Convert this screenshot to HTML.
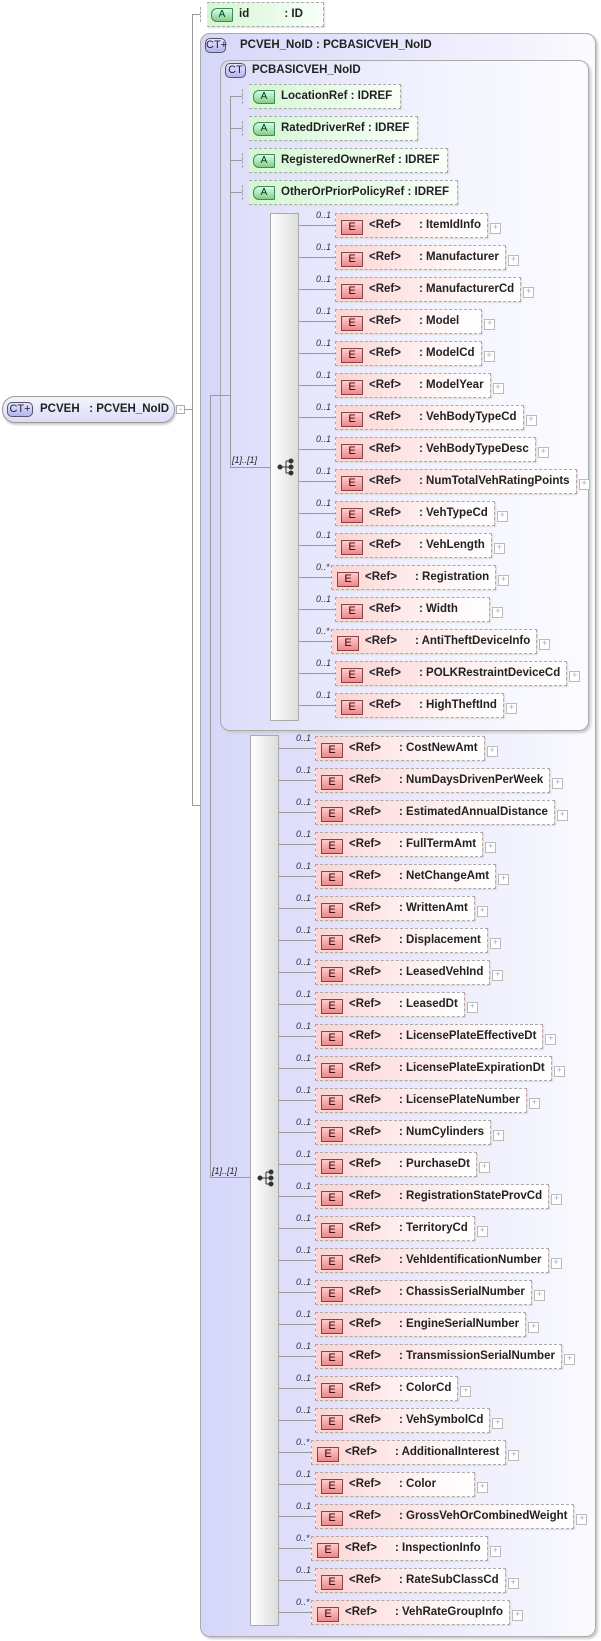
<!DOCTYPE html>
<html><head><meta charset="utf-8"><style>
*{margin:0;padding:0;box-sizing:border-box}
body{width:601px;height:1641px;background:#fff;position:relative;overflow:hidden;font-family:"Liberation Sans",Arial,sans-serif;font-weight:bold;font-size:11.5px;color:#222}
.a{position:absolute}
.ln{position:absolute;background:#999}
.ct{position:absolute;border:1px solid #aaa;border-radius:10px;background:linear-gradient(90deg,#d6d6fa 0%,#e8e8fc 50%,#fafaff 100%);box-shadow:2px 2px 2px #ccc}
.ico{position:absolute;border:1px solid #556;border-radius:5px;background:linear-gradient(#e4e4ff,#b4b4f0);font-weight:normal;font-size:11px;color:#223;text-align:center;line-height:13px;height:15px}
.at{position:absolute;height:25px;border:1px dashed #aaa;background:linear-gradient(90deg,#d4f6d4,#f8fff8);padding:0 8px 0 32px;line-height:23px;white-space:nowrap;border-left:none;box-shadow:1px 1px 1px #ddd}
.at:before{content:"";position:absolute;left:-7px;top:4px;width:14px;height:15px;border-left:1px dashed #aaa;transform:skewX(0)}
.at i{position:absolute;left:4px;top:5px;width:22px;height:14px;border:1px solid #485;border-radius:6px 1px 1px 6px;background:linear-gradient(#cfe,#8c8);font-style:normal;font-weight:normal;font-size:10px;text-align:center;line-height:12px;color:#030}
.seq{position:absolute;width:29px;border:1px solid #aaa;background:linear-gradient(90deg,#fff,#ddd)}
.r{position:absolute;height:25px}
.r .l{position:absolute;left:0;top:12px;height:1px;background:#999}
.r .m{position:absolute;top:-3px;font-style:italic;font-weight:normal;font-size:9px;color:#333}
.e{position:absolute;top:0;height:25px;border:1px dashed #aaa;background:linear-gradient(90deg,#fcd4d4,#fff6f6 70%,#fff);white-space:nowrap;line-height:23px;padding-right:6px;box-shadow:1px 1px 1px #ddd}
.e i{display:inline-block;vertical-align:top;margin:6px 6px 0 5px;width:22px;height:15px;border:1px solid #844;background:linear-gradient(#fcc,#e88);font-style:normal;font-weight:normal;font-size:11px;line-height:13px;text-align:center;color:#300}
.e b{display:inline-block;width:50px}
.e:after{content:"+";position:absolute;right:-14px;top:9px;width:9px;height:9px;border:1px solid #bbb;font-size:9px;line-height:7px;text-align:center;color:#aaa;font-weight:normal;background:#fff}
.r1{left:299px}.r1 .l{width:36px}.r1 .m{left:17px}.r1 .e{left:36px}.r1.s .e{left:32px}
.r2{left:279px}.r2 .l{width:36px}.r2 .m{left:17px}.r2 .e{left:36px}.r2.s .e{left:32px}
.sq{position:absolute;font-weight:normal;font-style:italic;font-size:9px}
</style></head><body>

<!-- connectors outside -->
<div class="ln" style="left:185px;top:409px;width:8px;height:1px"></div>
<div class="ln" style="left:192px;top:14px;width:1px;height:792px"></div>
<div class="ln" style="left:192px;top:14px;width:8px;height:1px"></div>
<div class="ln" style="left:192px;top:805px;width:9px;height:1px"></div>

<!-- root -->
<div class="a" style="left:2px;top:396px;width:173px;height:27px;border:1px solid #999;border-radius:13px;background:linear-gradient(#f4f4ff,#dcdcf8);box-shadow:1px 2px 2px #ccc"></div>
<div class="ico" style="left:7px;top:402px;width:26px">CT+</div>
<div class="a" style="left:40px;top:402px;line-height:14px">PCVEH&nbsp;&nbsp;&nbsp;: PCVEH_NoID</div>
<div class="a" style="left:176px;top:405px;width:9px;height:9px;border:1px solid #aaa;background:#fff;font-size:9px;line-height:6px;text-align:center;color:#999;font-weight:normal">-</div>

<!-- id -->
<div class="at" style="left:207px;top:2px;padding-right:20px">id&nbsp;&nbsp;&nbsp;&nbsp;&nbsp;&nbsp;&nbsp;&nbsp;&nbsp;&nbsp;&nbsp;: ID<i>A</i></div>

<!-- outer CT -->
<div class="ct" style="left:200px;top:33px;width:396px;height:1604px"></div>
<div class="ico" style="left:205px;top:38px;width:21px">CT+</div>
<div class="a" style="left:240px;top:38px;line-height:14px">PCVEH_NoID : PCBASICVEH_NoID</div>

<!-- inner CT -->
<div class="ct" style="left:220px;top:60px;width:369px;height:671px;background:linear-gradient(90deg,#dcdcfa,#f4f4ff 60%,#fbfbff)"></div>
<div class="ico" style="left:225px;top:63px;width:21px">CT</div>
<div class="a" style="left:252px;top:63px;line-height:14px">PCBASICVEH_NoID</div>

<!-- lines in outer -->
<div class="ln" style="left:210px;top:395px;width:1px;height:782px"></div>
<div class="ln" style="left:210px;top:395px;width:20px;height:1px"></div>
<div class="ln" style="left:230px;top:96px;width:1px;height:372px"></div>
<div class="ln" style="left:230px;top:96px;width:12px;height:1px"></div>
<div class="ln" style="left:230px;top:128px;width:12px;height:1px"></div>
<div class="ln" style="left:230px;top:160px;width:12px;height:1px"></div>
<div class="ln" style="left:230px;top:192px;width:12px;height:1px"></div>
<div class="ln" style="left:230px;top:467px;width:40px;height:1px"></div>
<div class="ln" style="left:210px;top:1177px;width:40px;height:1px"></div>

<div class="at" style="left:249px;top:84px">LocationRef : IDREF<i>A</i></div>
<div class="at" style="left:249px;top:116px">RatedDriverRef : IDREF<i>A</i></div>
<div class="at" style="left:249px;top:148px">RegisteredOwnerRef : IDREF<i>A</i></div>
<div class="at" style="left:249px;top:180px">OtherOrPriorPolicyRef : IDREF<i>A</i></div>

<!-- seq 1 -->
<div class="seq" style="left:270px;top:213px;height:508px"></div>
<div class="sq" style="left:232px;top:455px">[1]..[1]</div>
<svg class="a" style="left:277px;top:458px" width="18" height="18"><g fill="#333" stroke="#333"><circle cx="3" cy="9" r="2"/><circle cx="14" cy="3" r="2"/><circle cx="14" cy="9" r="2"/><circle cx="14" cy="15" r="2"/><path d="M3 9H9M9 3V15M9 3H14M9 9H14M9 15H14" fill="none"/></g></svg>

<div class="r r1" style="top:213px"><div class="l"></div><div class="m">0..1</div><div class="e"><i>E</i><b>&lt;Ref&gt;</b>: ItemIdInfo</div></div>
<div class="r r1" style="top:245px"><div class="l"></div><div class="m">0..1</div><div class="e"><i>E</i><b>&lt;Ref&gt;</b>: Manufacturer</div></div>
<div class="r r1" style="top:277px"><div class="l"></div><div class="m">0..1</div><div class="e"><i>E</i><b>&lt;Ref&gt;</b>: ManufacturerCd</div></div>
<div class="r r1" style="top:309px"><div class="l"></div><div class="m">0..1</div><div class="e"><i>E</i><b>&lt;Ref&gt;</b>: Model&nbsp;&nbsp;&nbsp;&nbsp;&nbsp;</div></div>
<div class="r r1" style="top:341px"><div class="l"></div><div class="m">0..1</div><div class="e"><i>E</i><b>&lt;Ref&gt;</b>: ModelCd</div></div>
<div class="r r1" style="top:373px"><div class="l"></div><div class="m">0..1</div><div class="e"><i>E</i><b>&lt;Ref&gt;</b>: ModelYear</div></div>
<div class="r r1" style="top:405px"><div class="l"></div><div class="m">0..1</div><div class="e"><i>E</i><b>&lt;Ref&gt;</b>: VehBodyTypeCd</div></div>
<div class="r r1" style="top:437px"><div class="l"></div><div class="m">0..1</div><div class="e"><i>E</i><b>&lt;Ref&gt;</b>: VehBodyTypeDesc</div></div>
<div class="r r1" style="top:469px"><div class="l"></div><div class="m">0..1</div><div class="e"><i>E</i><b>&lt;Ref&gt;</b>: NumTotalVehRatingPoints</div></div>
<div class="r r1" style="top:501px"><div class="l"></div><div class="m">0..1</div><div class="e"><i>E</i><b>&lt;Ref&gt;</b>: VehTypeCd</div></div>
<div class="r r1" style="top:533px"><div class="l"></div><div class="m">0..1</div><div class="e"><i>E</i><b>&lt;Ref&gt;</b>: VehLength</div></div>
<div class="r r1 s" style="top:565px"><div class="l"></div><div class="m">0..*</div><div class="e"><i>E</i><b>&lt;Ref&gt;</b>: Registration</div></div>
<div class="r r1" style="top:597px"><div class="l"></div><div class="m">0..1</div><div class="e"><i>E</i><b>&lt;Ref&gt;</b>: Width&nbsp;&nbsp;&nbsp;&nbsp;&nbsp;&nbsp;&nbsp;&nbsp;</div></div>
<div class="r r1 s" style="top:629px"><div class="l"></div><div class="m">0..*</div><div class="e"><i>E</i><b>&lt;Ref&gt;</b>: AntiTheftDeviceInfo</div></div>
<div class="r r1" style="top:661px"><div class="l"></div><div class="m">0..1</div><div class="e"><i>E</i><b>&lt;Ref&gt;</b>: POLKRestraintDeviceCd</div></div>
<div class="r r1" style="top:693px"><div class="l"></div><div class="m">0..1</div><div class="e"><i>E</i><b>&lt;Ref&gt;</b>: HighTheftInd</div></div>

<!-- seq 2 -->
<div class="seq" style="left:250px;top:735px;height:891px"></div>
<div class="sq" style="left:212px;top:1166px">[1]..[1]</div>
<svg class="a" style="left:257px;top:1169px" width="18" height="18"><g fill="#333" stroke="#333"><circle cx="3" cy="9" r="2"/><circle cx="14" cy="3" r="2"/><circle cx="14" cy="9" r="2"/><circle cx="14" cy="15" r="2"/><path d="M3 9H9M9 3V15M9 3H14M9 9H14M9 15H14" fill="none"/></g></svg>

<div class="r r2" style="top:736px"><div class="l"></div><div class="m">0..1</div><div class="e"><i>E</i><b>&lt;Ref&gt;</b>: CostNewAmt</div></div>
<div class="r r2" style="top:768px"><div class="l"></div><div class="m">0..1</div><div class="e"><i>E</i><b>&lt;Ref&gt;</b>: NumDaysDrivenPerWeek</div></div>
<div class="r r2" style="top:800px"><div class="l"></div><div class="m">0..1</div><div class="e"><i>E</i><b>&lt;Ref&gt;</b>: EstimatedAnnualDistance</div></div>
<div class="r r2" style="top:832px"><div class="l"></div><div class="m">0..1</div><div class="e"><i>E</i><b>&lt;Ref&gt;</b>: FullTermAmt</div></div>
<div class="r r2" style="top:864px"><div class="l"></div><div class="m">0..1</div><div class="e"><i>E</i><b>&lt;Ref&gt;</b>: NetChangeAmt</div></div>
<div class="r r2" style="top:896px"><div class="l"></div><div class="m">0..1</div><div class="e"><i>E</i><b>&lt;Ref&gt;</b>: WrittenAmt</div></div>
<div class="r r2" style="top:928px"><div class="l"></div><div class="m">0..1</div><div class="e"><i>E</i><b>&lt;Ref&gt;</b>: Displacement</div></div>
<div class="r r2" style="top:960px"><div class="l"></div><div class="m">0..1</div><div class="e"><i>E</i><b>&lt;Ref&gt;</b>: LeasedVehInd</div></div>
<div class="r r2" style="top:992px"><div class="l"></div><div class="m">0..1</div><div class="e"><i>E</i><b>&lt;Ref&gt;</b>: LeasedDt</div></div>
<div class="r r2" style="top:1024px"><div class="l"></div><div class="m">0..1</div><div class="e"><i>E</i><b>&lt;Ref&gt;</b>: LicensePlateEffectiveDt</div></div>
<div class="r r2" style="top:1056px"><div class="l"></div><div class="m">0..1</div><div class="e"><i>E</i><b>&lt;Ref&gt;</b>: LicensePlateExpirationDt</div></div>
<div class="r r2" style="top:1088px"><div class="l"></div><div class="m">0..1</div><div class="e"><i>E</i><b>&lt;Ref&gt;</b>: LicensePlateNumber</div></div>
<div class="r r2" style="top:1120px"><div class="l"></div><div class="m">0..1</div><div class="e"><i>E</i><b>&lt;Ref&gt;</b>: NumCylinders</div></div>
<div class="r r2" style="top:1152px"><div class="l"></div><div class="m">0..1</div><div class="e"><i>E</i><b>&lt;Ref&gt;</b>: PurchaseDt</div></div>
<div class="r r2" style="top:1184px"><div class="l"></div><div class="m">0..1</div><div class="e"><i>E</i><b>&lt;Ref&gt;</b>: RegistrationStateProvCd</div></div>
<div class="r r2" style="top:1216px"><div class="l"></div><div class="m">0..1</div><div class="e"><i>E</i><b>&lt;Ref&gt;</b>: TerritoryCd</div></div>
<div class="r r2" style="top:1248px"><div class="l"></div><div class="m">0..1</div><div class="e"><i>E</i><b>&lt;Ref&gt;</b>: VehIdentificationNumber</div></div>
<div class="r r2" style="top:1280px"><div class="l"></div><div class="m">0..1</div><div class="e"><i>E</i><b>&lt;Ref&gt;</b>: ChassisSerialNumber</div></div>
<div class="r r2" style="top:1312px"><div class="l"></div><div class="m">0..1</div><div class="e"><i>E</i><b>&lt;Ref&gt;</b>: EngineSerialNumber</div></div>
<div class="r r2" style="top:1344px"><div class="l"></div><div class="m">0..1</div><div class="e"><i>E</i><b>&lt;Ref&gt;</b>: TransmissionSerialNumber</div></div>
<div class="r r2" style="top:1376px"><div class="l"></div><div class="m">0..1</div><div class="e"><i>E</i><b>&lt;Ref&gt;</b>: ColorCd</div></div>
<div class="r r2" style="top:1408px"><div class="l"></div><div class="m">0..1</div><div class="e"><i>E</i><b>&lt;Ref&gt;</b>: VehSymbolCd</div></div>
<div class="r r2 s" style="top:1440px"><div class="l"></div><div class="m">0..*</div><div class="e"><i>E</i><b>&lt;Ref&gt;</b>: AdditionalInterest</div></div>
<div class="r r2" style="top:1472px"><div class="l"></div><div class="m">0..1</div><div class="e"><i>E</i><b>&lt;Ref&gt;</b>: Color&nbsp;&nbsp;&nbsp;&nbsp;&nbsp;&nbsp;&nbsp;&nbsp;&nbsp;&nbsp;</div></div>
<div class="r r2" style="top:1504px"><div class="l"></div><div class="m">0..1</div><div class="e"><i>E</i><b>&lt;Ref&gt;</b>: GrossVehOrCombinedWeight</div></div>
<div class="r r2 s" style="top:1536px"><div class="l"></div><div class="m">0..*</div><div class="e"><i>E</i><b>&lt;Ref&gt;</b>: InspectionInfo</div></div>
<div class="r r2" style="top:1568px"><div class="l"></div><div class="m">0..1</div><div class="e"><i>E</i><b>&lt;Ref&gt;</b>: RateSubClassCd</div></div>
<div class="r r2 s" style="top:1600px"><div class="l"></div><div class="m">0..*</div><div class="e"><i>E</i><b>&lt;Ref&gt;</b>: VehRateGroupInfo</div></div>

</body></html>
